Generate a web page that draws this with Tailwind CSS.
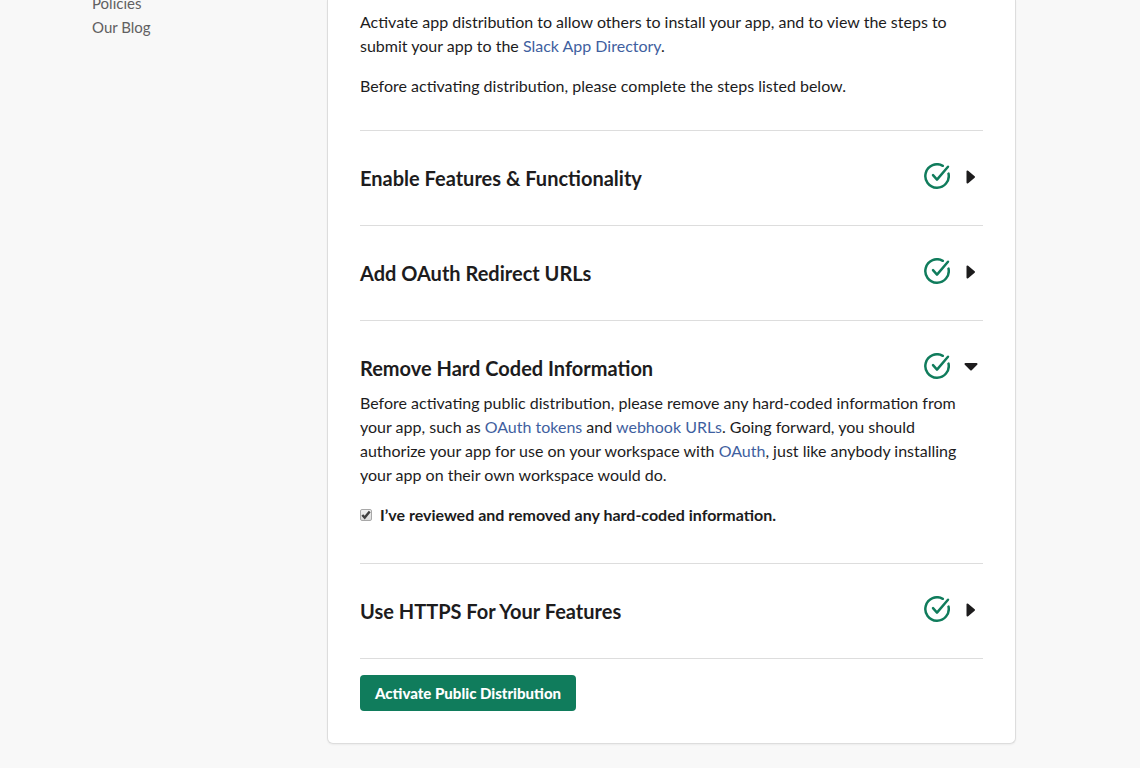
<!DOCTYPE html>
<html lang="en">
<head>
<meta charset="utf-8">
<meta name="viewport" content="width=device-width, initial-scale=1">
<title>Manage Distribution</title>
<script src="https://cdn.jsdelivr.net/npm/@tailwindcss/browser@4"></script>
</head>
<body class="min-h-screen bg-[#f8f8f8] font-['Lato',sans-serif] text-base leading-6 text-[#1d1c1d]">
<svg class="hidden">
  <symbol id="check" viewBox="0 0 26 26"><g fill="none" stroke="#107c5c" stroke-width="2.5" stroke-linecap="round" stroke-linejoin="round"><path d="M18.8 2.8A11.7 11.7 0 1 0 24.5 10.6"/><path d="M9 12.2l4 4.4L24 3.8"/></g></symbol>
  <symbol id="right" viewBox="0 0 16 16"><path d="M4.5 3.5v11l6.5-5.5z" fill="#1d1c1d" stroke="#1d1c1d" stroke-width="2" stroke-linejoin="round"/></symbol>
  <symbol id="down" viewBox="0 0 16 16"><path d="M2.5 6h11L8 11.5z" fill="#1d1c1d" stroke="#1d1c1d" stroke-width="2" stroke-linejoin="round"/></symbol>
</svg>
<div class="flex items-start pr-31">
  <nav class="w-[327px] shrink-0 pl-[92px] text-[15px] text-[#616061]">
    <ul class="-mt-[9px]">
      <li><a href="#">Policies</a></li>
      <li><a href="#">Our Blog</a></li>
    </ul>
  </nav>
  <main class="min-w-0 flex-1 rounded-b-md border border-t-0 border-[#dddddd] bg-white px-8 pt-[10px] pb-8 shadow-xs">
    <p class="mb-4">Activate app distribution to allow others to install your app, and to view the steps to submit your app to the <a href="#" class="text-[#3f5fa0]">Slack App Directory</a>.</p>
    <p class="mb-8">Before activating distribution, please complete the steps listed below.</p>
    <section class="border-t border-[#dddddd] py-8">
      <div class="flex h-[30px] items-start">
        <h2 class="flex-1 text-xl leading-[30px] font-bold">Enable Features &amp; Functionality</h2>
        <div class="mr-1 flex items-center gap-[13px]"><svg class="size-[26px]" role="img" aria-label="Complete"><use href="#check"/></svg><button aria-label="Expand Enable Features &amp; Functionality" aria-expanded="false"><svg class="size-4"><use href="#right"/></svg></button></div>
      </div>
    </section>
    <section class="border-t border-[#dddddd] py-8">
      <div class="flex h-[30px] items-start">
        <h2 class="flex-1 text-xl leading-[30px] font-bold">Add OAuth Redirect URLs</h2>
        <div class="mr-1 flex items-center gap-[13px]"><svg class="size-[26px]" role="img" aria-label="Complete"><use href="#check"/></svg><button aria-label="Expand Add OAuth Redirect URLs" aria-expanded="false"><svg class="size-4"><use href="#right"/></svg></button></div>
      </div>
    </section>
    <section class="border-t border-[#dddddd] pt-8 pb-9">
      <div class="flex h-[30px] items-start">
        <h2 class="flex-1 text-xl leading-[30px] font-bold">Remove Hard Coded Information</h2>
        <div class="mr-1 flex items-center gap-[13px]"><svg class="size-[26px]" role="img" aria-label="Complete"><use href="#check"/></svg><button aria-label="Collapse Remove Hard Coded Information" aria-expanded="true"><svg class="size-4"><use href="#down"/></svg></button></div>
      </div>
      <p class="mt-2 mb-4">Before activating public distribution, please remove any hard-coded information from your app, such as <a href="#" class="text-[#3f5fa0]">OAuth tokens</a> and <a href="#" class="text-[#3f5fa0]">webhook URLs</a>. Going forward, you should authorize your app for use on your workspace with <a href="#" class="text-[#3f5fa0]">OAuth</a>, just like anybody installing your app on their own workspace would do.</p>
      <label class="flex items-center gap-2 font-bold">
        <span class="relative size-3">
          <input type="checkbox" checked class="peer block size-3 appearance-none rounded-xs border border-[#a8a8a8] bg-linear-to-b from-[#f0f0f0] to-[#dcdcdc]">
          <svg class="pointer-events-none absolute inset-0 hidden size-3 peer-checked:block" viewBox="0 0 12 12" fill="none" stroke="#404040" stroke-width="2.4"><path d="M2.3 6l2.4 2.6L9.7 2.6"/></svg>
        </span>
        I’ve reviewed and removed any hard-coded information.
      </label>
    </section>
    <section class="border-t border-[#dddddd] py-8">
      <div class="flex h-[30px] items-start">
        <h2 class="flex-1 text-xl leading-[30px] font-bold">Use HTTPS For Your Features</h2>
        <div class="mr-1 flex items-center gap-[13px]"><svg class="size-[26px]" role="img" aria-label="Complete"><use href="#check"/></svg><button aria-label="Expand Use HTTPS For Your Features" aria-expanded="false"><svg class="size-4"><use href="#right"/></svg></button></div>
      </div>
    </section>
    <div class="border-t border-[#dddddd] pt-4">
      <button class="block h-9 rounded-sm bg-[#107c5c] px-[15px] text-[15px] font-black text-white">Activate Public Distribution</button>
    </div>
  </main>
</div>
</body>
</html>
